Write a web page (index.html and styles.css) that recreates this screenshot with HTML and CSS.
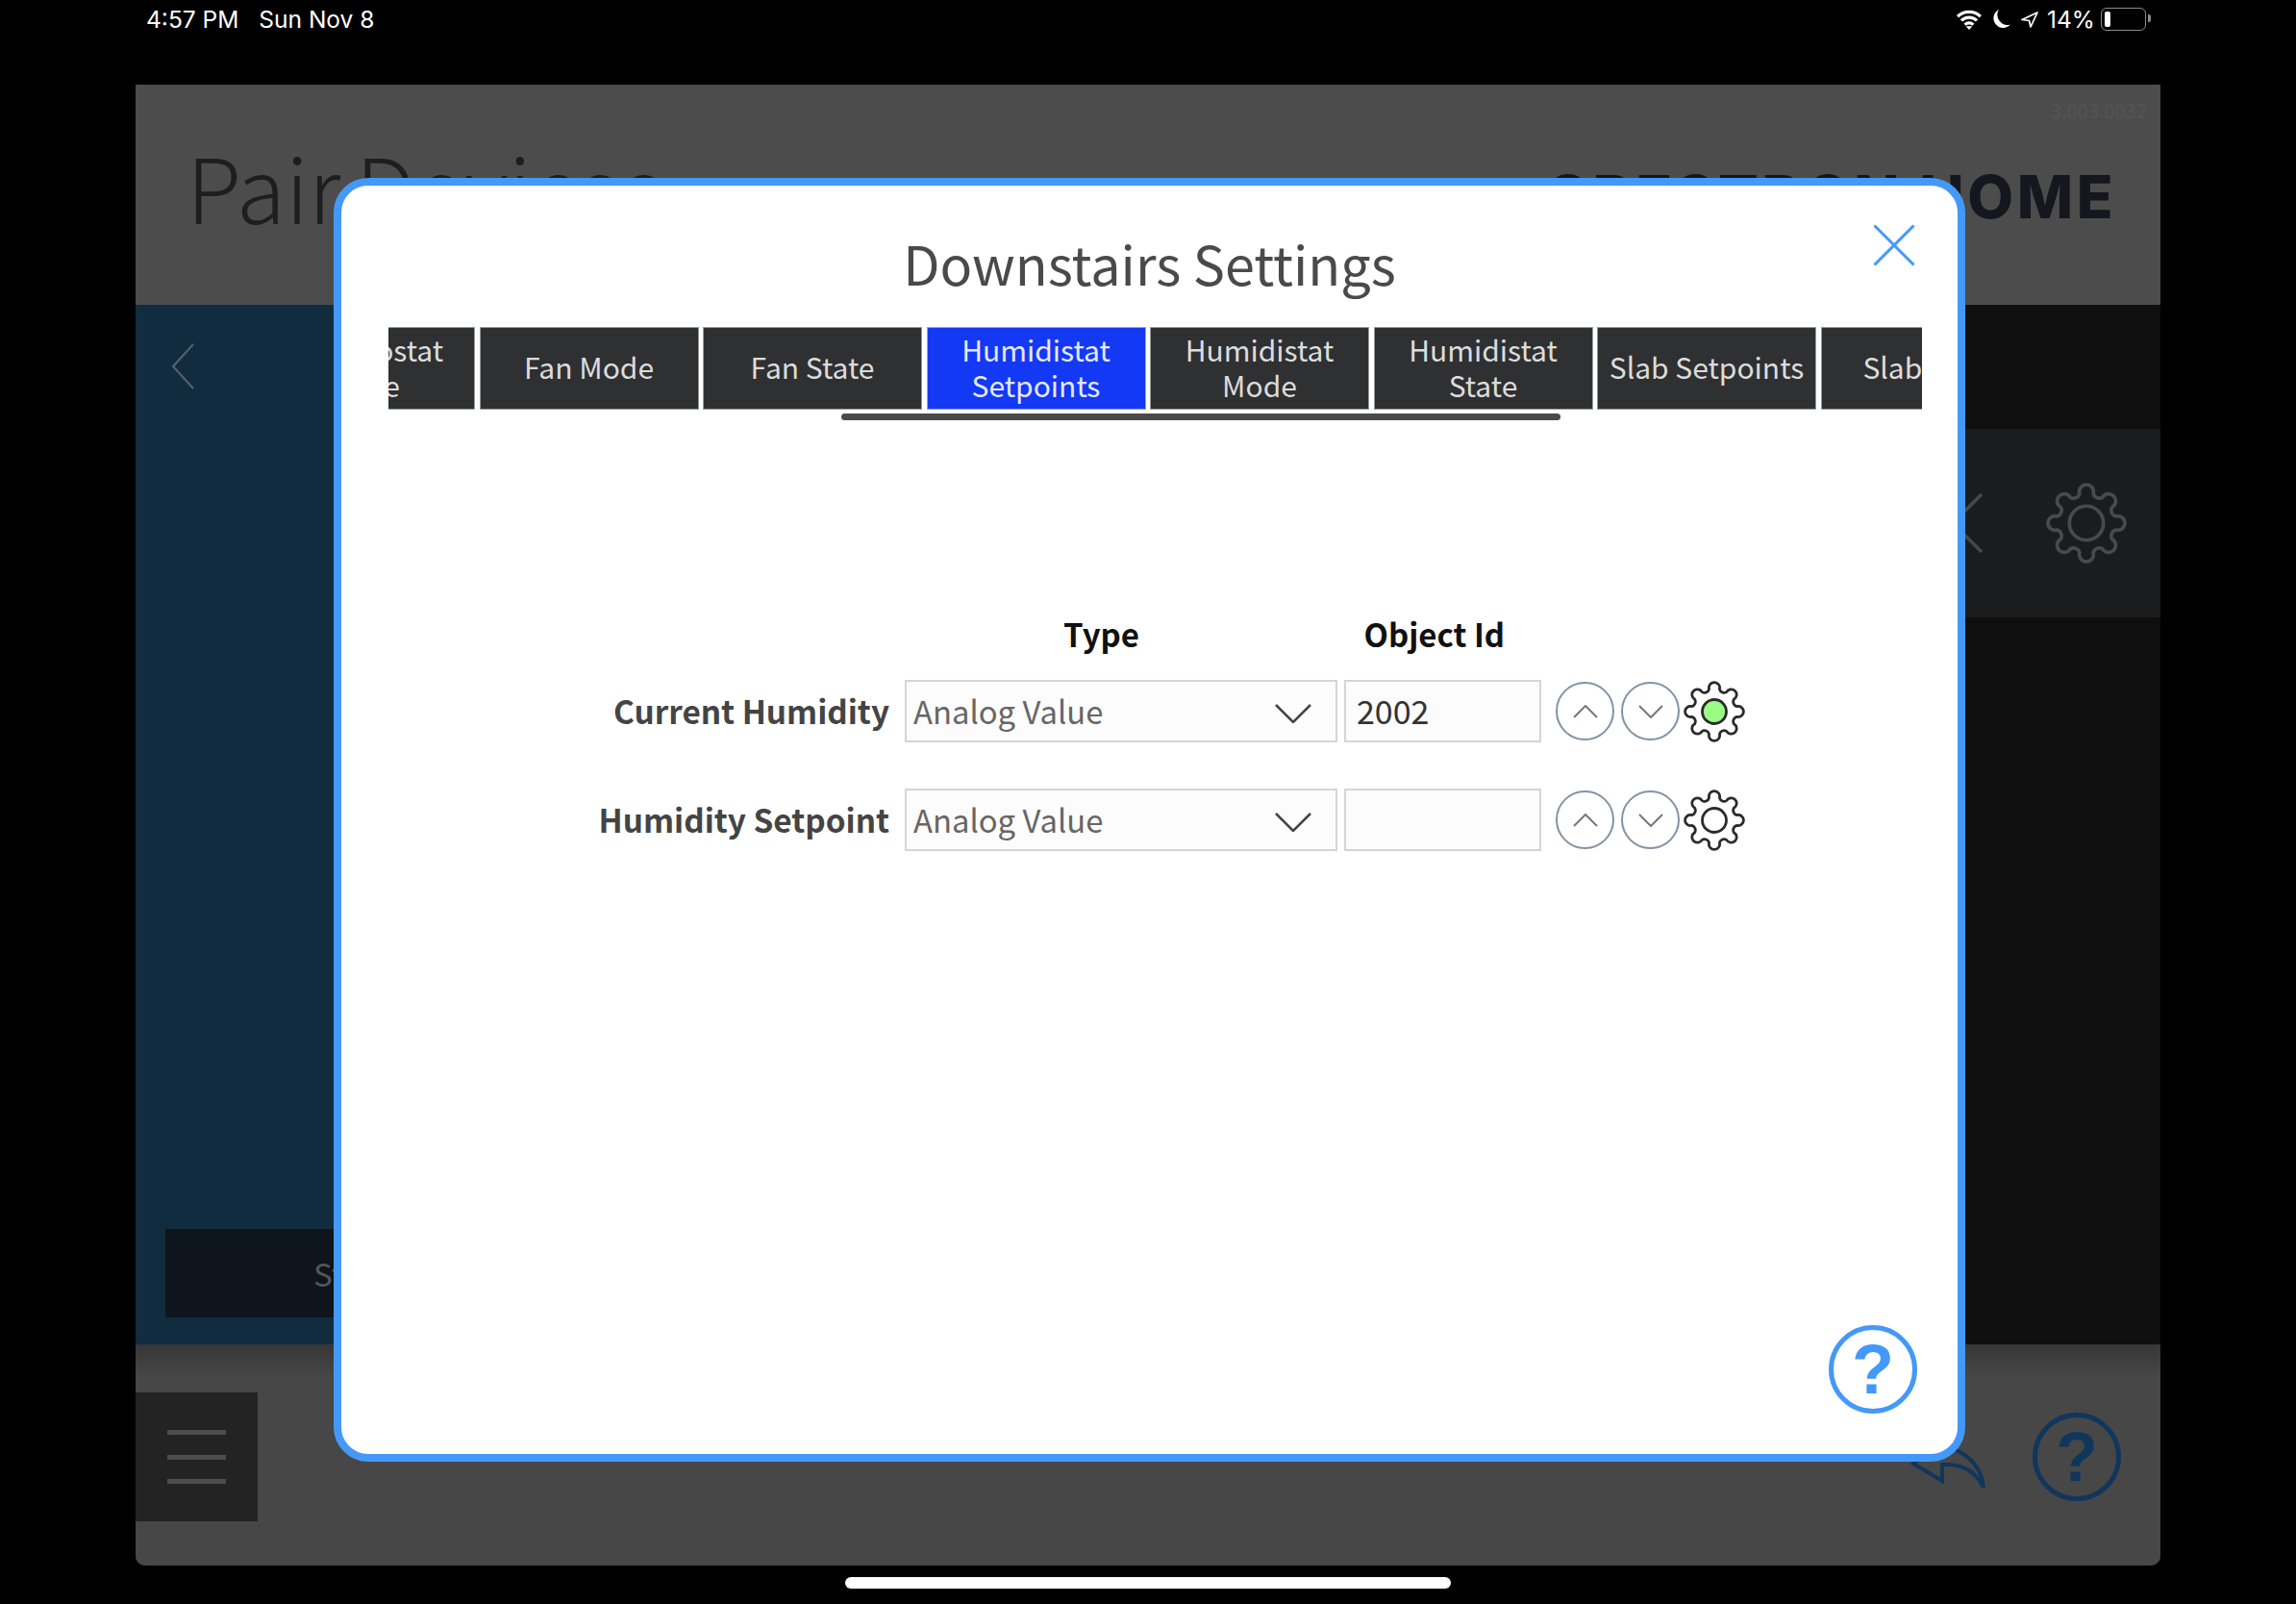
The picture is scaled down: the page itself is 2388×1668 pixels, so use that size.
FILE: index.html
```html
<!DOCTYPE html>
<html lang="en">
  <head>
    <meta charset="UTF-8" />
    <title>Downstairs Settings</title>
    <link rel="stylesheet" href="styles.css">
  </head>
  <body>
    <div class="status-bar">
      <div class="status-left">
        <span>4:57 PM</span>
        <span>Sun Nov 8</span>
      </div>
      <div class="status-right">
        <svg class="ico-wifi" viewBox="0 0 28 22"><path d="M1.500 7.500a18 18 0 0 1 25 0M5.500 12a12 12 0 0 1 17 0M9.500 16.500a6 6 0 0 1 9 0" fill="none" stroke="#fff" stroke-width="3.400"/><path d="M14 22l-3.500-4h7z" fill="#fff"/></svg>
        <svg class="ico-moon" viewBox="0 0 19 20"><path d="M7 0a10 10 0 1 0 12 15.500A10.500 10.500 0 0 1 7 0z" fill="#fff"/></svg>
        <svg class="ico-loc" viewBox="0 0 18 17"><path d="M17 1L1 8.500l7.500 1 1.500 6.500z" fill="none" stroke="#fff" stroke-width="1.700" stroke-linejoin="round"/></svg>
        <span>14%</span>
        <div class="battery"><div class="battery-fill"></div></div>
      </div>
    </div>

    <div class="app">
      <header class="app-header">
        <h1>Pair Devices</h1>
        <div class="brand">CRESTRON HOME</div>
        <div class="version">3.003.0032</div>
      </header>

      <div class="app-main">
        <aside class="side">
          <svg class="back" viewBox="0 0 24 48"><path d="M23 1L2 24l21 23" fill="none" stroke="#596067" stroke-width="2"/></svg>
          <div class="side-btn">Start</div>
        </aside>
        <div class="content">
          <div class="content-band">
            <svg class="band-x" viewBox="0 0 62 62"><path d="M1 1l60 60M61 1L1 61" fill="none" stroke="#484848" stroke-width="3.500"/></svg>
            <svg class="band-gear" viewBox="0 0 64 64"><use href="#gear" stroke="#4a4a4a" /><circle cx="32" cy="32" r="13.500" fill="none" stroke="#4a4a4a" stroke-width="2.800"/></svg>
          </div>
        </div>
      </div>

      <footer class="app-footer">
        <div class="menu-btn"><i></i><i></i><i></i></div>
        <div class="footer-right">
          <svg class="reply" viewBox="0 0 80 56"><path d="M35 5L5 27l30 18V28c20-1 35 7 43 24C76 30 60 12 35 10z" fill="none" stroke="#10365c" stroke-width="4"/></svg>
          <div class="help help-dim">?</div>
        </div>
      </footer>

      <div class="modal">
        <h2 class="modal-title">Downstairs Settings</h2>
        <svg class="modal-close" viewBox="0 0 44 44"><path d="M1.500 1.500l41 41M42.500 1.500l-41 41" fill="none" stroke="#4499f8" stroke-width="3"/></svg>

        <div class="tabs">
          <div class="tabs-track">
            <div class="tab">Thermostat State</div>
            <div class="tab">Fan Mode</div>
            <div class="tab">Fan State</div>
            <div class="tab active">Humidistat Setpoints</div>
            <div class="tab">Humidistat Mode</div>
            <div class="tab">Humidistat State</div>
            <div class="tab">Slab Setpoints</div>
            <div class="tab">Slab State</div>
          </div>
        </div>
        <div class="scroll-thumb"></div>

        <div class="grid">
          <div class="col-head col-type">Type</div>
          <div class="col-head col-id">Object Id</div>

          <div class="row">
            <label class="row-label">Current Humidity</label>
            <div class="select">
              <span>Analog Value</span>
              <svg viewBox="0 0 38 20"><path d="M1 1l18 18L37 1" fill="none" stroke="#444" stroke-width="2.500"/></svg>
            </div>
            <div class="input">2002</div>
            <div class="round-btn"><svg viewBox="0 0 26 14"><path d="M1 13L13 1l12 12" fill="none" stroke="#777" stroke-width="2"/></svg></div>
            <div class="round-btn"><svg viewBox="0 0 26 14"><path d="M1 1l12 12L25 1" fill="none" stroke="#777" stroke-width="2"/></svg></div>
            <svg class="gear" viewBox="0 0 64 64"><use href="#gear" stroke="#2b2b2b" /><circle cx="32" cy="32" r="12.500" fill="#9afc85" stroke="#2b2b2b" stroke-width="2.800"/></svg>
          </div>

          <div class="row">
            <label class="row-label">Humidity Setpoint</label>
            <div class="select">
              <span>Analog Value</span>
              <svg viewBox="0 0 38 20"><path d="M1 1l18 18L37 1" fill="none" stroke="#444" stroke-width="2.500"/></svg>
            </div>
            <div class="input"></div>
            <div class="round-btn"><svg viewBox="0 0 26 14"><path d="M1 13L13 1l12 12" fill="none" stroke="#777" stroke-width="2"/></svg></div>
            <div class="round-btn"><svg viewBox="0 0 26 14"><path d="M1 1l12 12L25 1" fill="none" stroke="#777" stroke-width="2"/></svg></div>
            <svg class="gear" viewBox="0 0 64 64"><use href="#gear" stroke="#2b2b2b" /><circle cx="32" cy="32" r="12.500" fill="none" stroke="#2b2b2b" stroke-width="2.800"/></svg>
          </div>
        </div>

        <div class="help help-modal">?</div>
      </div>
    </div>

    <div class="home-wrap"><div class="home-bar"></div></div>

    <svg class="defs" width="0" height="0">
      <defs>
        <path id="gear" fill="none" stroke-width="2.800" stroke-linejoin="round" d="M26.600 8.620A5.600 5.600 0 1 1 37.400 8.620A5 5 0 0 0 44.720 11.650A5.600 5.600 0 1 1 52.350 19.280A5 5 0 0 0 55.380 26.600A5.600 5.600 0 1 1 55.380 37.400A5 5 0 0 0 52.350 44.720A5.600 5.600 0 1 1 44.720 52.350A5 5 0 0 0 37.400 55.380A5.600 5.600 0 1 1 26.600 55.380A5 5 0 0 0 19.280 52.350A5.600 5.600 0 1 1 11.650 44.720A5 5 0 0 0 8.620 37.400A5.600 5.600 0 1 1 8.620 26.600A5 5 0 0 0 11.650 19.280A5.600 5.600 0 1 1 19.280 11.650A5 5 0 0 0 26.600 8.620Z"/>
      </defs>
    </svg>
  </body>
</html>
```

FILE: styles.css
```css
body {
  margin: 0;
  width: 2388px;
  height: 1668px;
  overflow: hidden;
  background-color: #000;
  font-family: "Noto Sans CJK SC", "Noto Sans", sans-serif;
}

/* status bar */
.status-bar {
  height: 88px;
  padding: 0 156px 48px 152px;
  box-sizing: border-box;
  display: flex;
  justify-content: space-between;
  align-items: center;
  color: #fff;
  font-family: Inter, Roboto, sans-serif;
  font-size: 24.500px;
}
.status-left {
  display: flex;
  gap: 21px;
}
.status-right {
  display: flex;
  align-items: center;
}
.ico-wifi {
  width: 28px;
  height: 21px;
}
.ico-moon {
  width: 19px;
  height: 20px;
  margin-left: 10px;
}
.ico-loc {
  width: 18px;
  height: 17px;
  margin-left: 11px;
}
.status-right span {
  margin-left: 9px;
  width: 47px;
}
.battery {
  position: relative;
  width: 47px;
  height: 24px;
  margin-left: 9px;
  padding: 3px;
  box-sizing: border-box;
  border: 1.500px solid #8a8a8a;
  border-radius: 6px;
}
.battery::after {
  content: "";
  position: absolute;
  right: -6px;
  top: 6px;
  width: 3px;
  height: 8px;
  background-color: #8a8a8a;
  border-radius: 0 2px 2px 0;
}
.battery-fill {
  width: 6px;
  height: 100%;
  background-color: #fff;
  border-radius: 2px;
}

/* dimmed app behind the dialog */
.app {
  position: relative;
  width: 2106px;
  height: 1540px;
  margin-left: 141px;
  border-radius: 0 0 10px 10px;
  overflow: hidden;
  background-color: #474747;
}
.app-header {
  position: relative;
  height: 229px;
  background-color: #4c4c4c;
}
.app-header h1 {
  margin: 0;
  padding: 55px 0 0 53px;
  font-size: 93px;
  line-height: 100px;
  font-weight: 300;
  word-spacing: -5px;
  color: #1e1e1e;
}
.brand {
  position: absolute;
  top: 81px;
  right: 46px;
  font-family: Inter, sans-serif;
  font-size: 62px;
  line-height: 72px;
  font-weight: 800;
  letter-spacing: 3.500px;
  color: #14171d;
}
.version {
  position: absolute;
  top: 15px;
  right: 14px;
  font-size: 20px;
  line-height: 24px;
  color: #545454;
}

.app-main {
  display: flex;
  height: 1081px;
}
.side {
  position: relative;
  width: 560px;
  background-color: #122c3f;
}
.back {
  position: absolute;
  left: 37px;
  top: 40px;
  width: 24px;
  height: 48px;
}
.side-btn {
  position: absolute;
  left: 31px;
  bottom: 28px;
  width: 500px;
  height: 92px;
  box-sizing: border-box;
  padding-left: 154px;
  display: flex;
  align-items: center;
  background-color: #0e151c;
  color: #555;
  font-size: 33px;
}
.content {
  flex: 1;
  background-color: #0f0f0f;
  padding-top: 129px;
}
.content-band {
  height: 196px;
  background-color: #1b1c1d;
  display: flex;
  justify-content: flex-end;
  align-items: center;
  gap: 66px;
  padding-right: 35px;
}
.band-x {
  width: 62px;
  height: 62px;
}
.band-gear {
  width: 84px;
  height: 84px;
}

.app-footer {
  height: 230px;
  display: flex;
  justify-content: space-between;
  align-items: center;
  background: linear-gradient(#363636, #474747 34px);
}
.menu-btn {
  width: 127px;
  height: 134px;
  box-sizing: border-box;
  padding: 39px 33px;
  display: flex;
  flex-direction: column;
  justify-content: space-between;
  background-color: #232323;
  margin-top: 4px;
}
.menu-btn i {
  display: block;
  height: 5px;
  background-color: #4d4d4d;
}
.footer-right {
  display: flex;
  align-items: center;
  gap: 49px;
  padding-right: 41px;
  margin-top: 3px;
}
.reply {
  width: 80px;
  height: 56px;
  margin-top: 17px;
}
.help {
  width: 92px;
  height: 92px;
  box-sizing: border-box;
  border: 5px solid;
  border-radius: 50%;
  display: flex;
  align-items: center;
  justify-content: center;
  font-family: "Liberation Sans", Arial, sans-serif;
  font-size: 72px;
  font-weight: 700;
  line-height: 1;
}
.help-dim {
  color: #10365c;
}

/* dialog */
.modal {
  position: absolute;
  left: 206px;
  top: 97px;
  width: 1697px;
  height: 1335px;
  box-sizing: border-box;
  border: 8px solid #4499f8;
  border-radius: 36px;
  background-color: #fff;
}
.modal-title {
  margin: 0;
  padding-top: 46px;
  text-align: center;
  font-size: 55.700px;
  line-height: 68px;
  font-weight: 400;
  color: #4a4a4a;
}
.modal-close {
  position: absolute;
  right: 44px;
  top: 40px;
  width: 44px;
  height: 44px;
}
.tabs {
  width: 1595px;
  margin: 33px 0 0 49px;
  overflow: hidden;
}
.tabs-track {
  display: flex;
  gap: 4.500px;
  margin-left: -138px;
}
.tab {
  flex: 0 0 228px;
  height: 86px;
  box-sizing: border-box;
  padding: 0 10px 3px;
  display: flex;
  align-items: center;
  justify-content: center;
  text-align: center;
  border: 1px solid #9a9a9a;
  background-color: #2f3032;
  color: #dcdcdc;
  font-size: 30px;
  line-height: 37px;
}
.tab.active {
  background-color: #1339f5;
  border-color: #8fa0f8;
  color: #e4e8ff;
}
.scroll-thumb {
  width: 748px;
  height: 7px;
  margin: 4px 0 0 520px;
  border-radius: 4px;
  background-color: #4a4a4a;
}

.grid {
  margin-top: 199px;
}
.col-head {
  display: inline-block;
  font-size: 33px;
  line-height: 46px;
  font-weight: 700;
  color: #111;
}
.col-type {
  margin-left: 751px;
}
.col-id {
  margin-left: 230px;
}
.row {
  display: flex;
  align-items: center;
  height: 65px;
  margin-top: 25px;
  padding-left: 258px;
}
.row + .row {
  margin-top: 48px;
}
.row-label {
  width: 312px;
  margin-right: 16px;
  padding-bottom: 2px;
  text-align: right;
  font-size: 33.300px;
  font-weight: 700;
  color: #444;
  white-space: nowrap;
}
.select {
  width: 450px;
  height: 65px;
  box-sizing: border-box;
  padding: 0 25px 2px 7px;
  display: flex;
  align-items: center;
  justify-content: space-between;
  border: 2px solid #d5d5d5;
  background-color: #fcfcfc;
  color: #666;
  font-size: 32.800px;
}
.select svg {
  width: 38px;
  height: 20px;
  margin-top: 6px;
}
.input {
  width: 205px;
  height: 65px;
  margin-left: 7px;
  box-sizing: border-box;
  padding: 0 0 2px 11px;
  display: flex;
  align-items: center;
  border: 2px solid #d5d5d5;
  background-color: #fcfcfc;
  color: #333;
  font-size: 34px;
}
.round-btn {
  width: 61px;
  height: 61px;
  box-sizing: border-box;
  margin-left: 7px;
  display: flex;
  align-items: center;
  justify-content: center;
  border: 2px solid #8492a3;
  border-radius: 50%;
}
.input + .round-btn {
  margin-left: 15px;
}
.round-btn svg {
  width: 26px;
  height: 14px;
}
.gear {
  width: 64px;
  height: 64px;
  margin-left: 4px;
}
.help-modal {
  position: absolute;
  right: 42px;
  bottom: 42px;
  color: #4499f8;
  background-color: #fff;
}

.home-wrap {
  display: flex;
  justify-content: center;
  padding-top: 12px;
}
.home-bar {
  width: 630px;
  height: 12px;
  border-radius: 6px;
  background-color: #fff;
}
.defs {
  position: absolute;
}
```
